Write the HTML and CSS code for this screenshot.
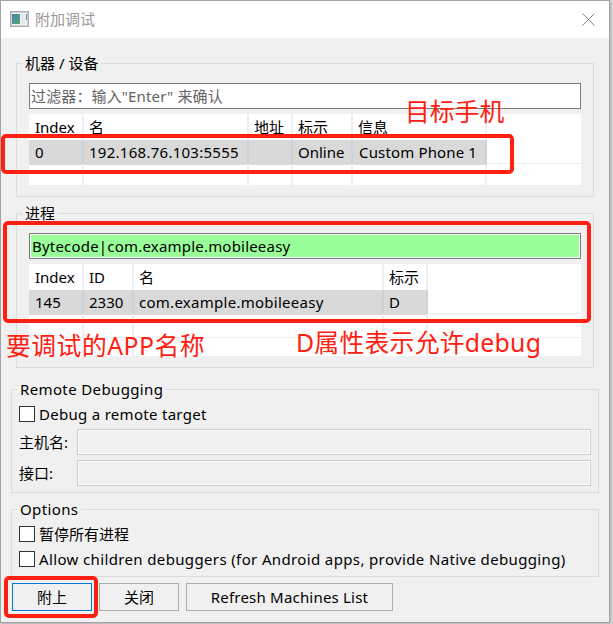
FILE: index.html
```html
<!DOCTYPE html>
<html lang="zh-CN">
<head>
<meta charset="utf-8">
<title>附加调试</title>
<link rel="stylesheet" href="styles.css">
</head>
<body>
<main class="window">
  <header class="titlebar">
    <svg class="app-icon" width="19" height="16" viewBox="0 0 19 16">
      <defs><linearGradient id="pane" x1="0" y1="0" x2="1" y2="1"><stop offset="0" stop-color="#4d7fa5"/><stop offset="1" stop-color="#55a878"/></linearGradient></defs>
      <rect x=".75" y=".75" width="17.5" height="14.5" fill="#f1f3f4" stroke="#a9b0b5" stroke-width="1.5"/>
      <rect x="2" y="3" width="8" height="10" fill="url(#pane)"/>
      <rect x="11" y="3" width="4" height="10" fill="#e3e8e8"/>
      <rect x="16" y="3" width="1" height="6" fill="#5b9c92"/>
    </svg>
    <h1 class="title">附加调试</h1>
    <svg class="close" width="13" height="13" viewBox="0 0 13 13"><path d="M.5 .5 12.5 12.5M12.5 .5 .5 12.5" stroke="#858585" stroke-width="1" fill="none"/></svg>
  </header>

  <section class="group machines">
    <h2 class="legend">机器 / 设备</h2>
    <div class="filter hint"><span>过滤器：输入"Enter" 来确认</span></div>
    <div class="table">
      <div class="row head"><span>Index</span><span>名</span><span>地址</span><span>标示</span><span>信息</span><span></span></div>
      <div class="row selected"><span>0</span><span class="ip">192.168.76.103:5555</span><span></span><span>Online</span><span class="phone">Custom Phone 1</span><span></span></div>
      <div class="row"><span></span><span></span><span></span><span></span><span></span><span></span></div>
    </div>
  </section>

  <section class="group processes">
    <h2 class="legend">进程</h2>
    <div class="filter match"><span>Bytecode|com.example.mobileeasy</span></div>
    <div class="table">
      <div class="row head"><span>Index</span><span>ID</span><span>名</span><span>标示</span><span></span></div>
      <div class="row selected"><span>145</span><span>2330</span><span class="package">com.example.mobileeasy</span><span>D</span><span></span></div>
      <div class="row"><span></span><span></span><span></span><span></span><span></span></div>
      <div class="row"><span></span><span></span><span></span><span></span><span></span></div>
    </div>
  </section>

  <section class="group wide remote">
    <h2 class="legend">Remote Debugging</h2>
    <div class="check"><i class="box"></i><span class="target">Debug a remote target</span></div>
    <div class="field"><span>主机名:</span><div class="input"></div></div>
    <div class="field"><span>接口:</span><div class="input"></div></div>
  </section>

  <section class="group wide options">
    <h2 class="legend">Options</h2>
    <div class="check"><i class="box"></i><span>暂停所有进程</span></div>
    <div class="check"><i class="box"></i><span class="children">Allow children debuggers (for Android apps, provide Native debugging)</span></div>
  </section>

  <footer class="buttons">
    <div class="button primary">附上</div>
    <div class="button">关闭</div>
    <div class="button large">Refresh Machines List</div>
  </footer>

  <div class="mark mark-device"></div>
  <div class="mark mark-process"></div>
  <div class="mark mark-attach"></div>
  <div class="note note-device">目标手机</div>
  <div class="note note-app">要调试的APP名称</div>
  <div class="note note-flag">D属性表示允许debug</div>
</main>
</body>
</html>
```
FILE: styles.css
```css
* { box-sizing: border-box; }
body {
  margin: 0;
  width: 613px;
  height: 624px;
  overflow: hidden;
  background: #dcdcdc;
  font: 15px/20px "Noto Sans", "Noto Sans CJK SC", sans-serif;
  color: #000;
}
h1, h2 { margin: 0; font-size: inherit; font-weight: 400; }
.window {
  position: relative;
  width: 610px;
  height: 623px;
  border: 1px solid #a2a2a2;
  background: #f0f0f0;
  box-shadow: 1px 1px 3px #aaa;
}
.titlebar {
  display: flex;
  align-items: center;
  height: 37px;
  padding: 0 14px 0 9px;
  background: #fff;
}
.app-icon { margin-top: -1px; }
.title { flex: 1; margin: -1px 0 0 6px; color: #999; }
.group {
  width: 578px;
  margin-left: 15px;
  padding: 0 12px;
  border: 1px solid #dcdcdc;
}
.legend {
  width: max-content;
  height: 20px;
  margin: -11px 0 0 -7px;
  padding: 0 3px;
  background: #f0f0f0;
  white-space: nowrap;
}
.machines { height: 134px; margin-top: 25px; }
.processes { height: 155px; margin-top: 16px; }
.filter {
  height: 26px;
  margin-top: 10px;
  padding: 2px 1px;
  border: 1px solid #7a7a7a;
  background: #fff;
  white-space: nowrap;
}
.hint { color: #636363; letter-spacing: .14px; }
.match { padding: 1px; letter-spacing: .2px; }
.match span { display: block; height: 22px; padding-left: 1px; background: #99ff99; line-height: 23px; }
.table { margin-top: 5px; background: #fff; overflow: hidden; }
.machines .table { height: 71px; }
.processes .table { height: 92px; }
.row { display: grid; height: 24px; border-bottom: 1px solid #eeeef0; }
.machines .row { grid-template-columns: 55px 165px 44px 60px 134px 1fr; }
.processes .row { grid-template-columns: 55px 50px 250px 44px 1fr; }
.row span { padding-left: 5px; border-right: 2px solid #edeff5; white-space: nowrap; line-height: 25px; }
.row span:first-child { padding-left: 6px; }
.row span.phone { padding-left: 6px; }
.row span:last-child { border-right: 0; }
.row.head { height: 26px; border-bottom: 0; }
.row.head span { line-height: 26px; }
.row.selected span:not(:last-child) { background: #d9d9d9; border-right-color: #cbd2d9; }
.ip { letter-spacing: .27px; }
.phone { letter-spacing: .15px; }
.package { letter-spacing: .27px; }
.group.wide { width: 588px; margin-left: 10px; padding: 0 7px; }
.wide .legend { margin-left: -2px; letter-spacing: .37px; }
.remote { height: 104px; margin-top: 21px; }
.options { height: 68px; margin-top: 16px; }
.check { display: flex; align-items: center; gap: 4px; height: 16px; margin-top: 7px; white-space: nowrap; }
.check + .check { margin-top: 9px; }
.target { letter-spacing: .29px; }
.children { letter-spacing: .365px; }
.box { flex: none; width: 16px; height: 16px; border: 1px solid #333; background: #fff; }
.field { display: flex; align-items: center; height: 26px; margin-top: 5px; }
.check + .field { margin-top: 7px; }
.field span { width: 58px; }
.input { flex: 1; height: 26px; border: 1px solid #ccc; box-shadow: inset 0 0 0 1px #fff; }
.buttons { display: flex; gap: 7px; margin: 6px 0 0 11px; }
.button {
  width: 80px;
  height: 28px;
  border: 1px solid #adadad;
  text-align: center;
  line-height: 27px;
}
.button.primary { border-color: #0078d7; }
.button.large { width: 207px; letter-spacing: .2px; }
.mark { position: absolute; border: 4px solid #ff2012; border-radius: 5px; }
.mark-device { left: 0; top: 133px; width: 513px; height: 40px; }
.mark-process { left: 2px; top: 220px; width: 588px; height: 102px; }
.mark-attach { left: 3px; top: 575px; width: 94px; height: 42px; }
.note {
  position: absolute;
  color: #ff2012;
  font-size: 24.8px;
  line-height: 32px;
  white-space: nowrap;
}
.note-device { left: 404px; top: 94px; }
.note-app { left: 5px; top: 328px; letter-spacing: .5px; }
.note-flag { left: 295px; top: 325px; letter-spacing: .27px; }
```
